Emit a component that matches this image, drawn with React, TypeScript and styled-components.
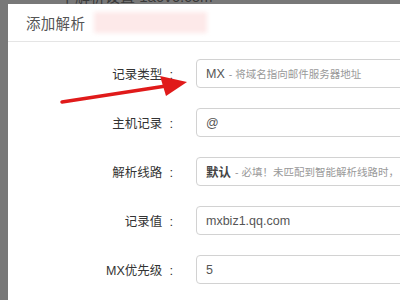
import React from "react";
import styled, { createGlobalStyle } from "styled-components";

const GlobalStyle = createGlobalStyle`
  html, body {
    margin: 0;
    padding: 0;
    width: 400px;
    height: 300px;
    overflow: hidden;
    background: #787878;
    font-family: "Liberation Sans", "Noto Sans CJK SC", sans-serif;
  }
`;

const Page = styled.div`
  position: relative;
  width: 400px;
  height: 300px;
  overflow: hidden;
  background: #787878;
`;

const BackdropStrip = styled.div`
  height: 4px;
  overflow: hidden;
  padding-left: 60px;
  color: #3a3a3a;
  font-size: 15px;
  line-height: 1;
  white-space: nowrap;

  span {
    display: block;
    margin-top: -11px;
  }
`;

const Modal = styled.div`
  margin-left: 8px;
  width: 420px;
  height: 296px;
  background: #fff;
`;

const Header = styled.div`
  display: flex;
  align-items: center;
  height: 37px;
  padding-left: 18px;
  border-bottom: 1px solid #e5e5e5;
`;

const Title = styled.h4`
  margin: 0;
  font-size: 14.5px;
  font-weight: normal;
  color: #555;
  letter-spacing: 0.3px;
`;

const Blur = styled.span`
  margin-left: 9px;
  width: 113px;
  height: 21px;
  background: #fde9e9;
  filter: blur(2px);
`;

const Body = styled.div`
  display: flex;
  flex-direction: column;
  gap: 20px;
  padding-top: 17px;
`;

const Row = styled.div`
  display: grid;
  grid-template-columns: 167px 1fr;
  column-gap: 21px;
  align-items: center;
`;

const Label = styled.label`
  text-align: right;
  font-size: 12.5px;
  color: #333;
  white-space: nowrap;
`;

const Colon = styled.span`
  margin-left: 7px;
  margin-right: 2px;
  font-size: 13px;
`;

const Field = styled.div`
  box-sizing: border-box;
  height: 29px;
  display: flex;
  align-items: center;
  padding-left: 9px;
  border: 1px solid #d2d2d2;
  border-radius: 4px;
  font-size: 12.5px;
  color: #555;
  white-space: nowrap;
  overflow: hidden;
`;

const Main = styled.span<{ $bold?: boolean }>`
  color: ${(p) => (p.$bold ? "#444" : "#555")};
  font-weight: ${(p) => (p.$bold ? "bold" : "normal")};
`;

const Hint = styled.span`
  margin-left: 4px;
  font-size: 10.5px;
  color: #999;
`;

const Arrow = styled.svg`
  position: absolute;
  left: 0;
  top: 0;
  pointer-events: none;
`;

const rows = [
  { label: "记录类型", main: "MX", hint: "- 将域名指向邮件服务器地址" },
  { label: "主机记录", main: "@" },
  { label: "解析线路", main: "默认", hint: "- 必填！未匹配到智能解析线路时，", bold: true },
  { label: "记录值", main: "mxbiz1.qq.com" },
  { label: "MX优先级", main: "5" },
];

export default function App() {
  return (
    <Page>
      <GlobalStyle />
      <BackdropStrip>
        <span>下解析设置 1a6v6.com</span>
      </BackdropStrip>
      <Modal>
        <Header>
          <Title>添加解析</Title>
          <Blur />
        </Header>
        <Body>
          {rows.map((r) => (
            <Row key={r.label}>
              <Label>
                {r.label}
                <Colon>:</Colon>
              </Label>
              <Field>
                <Main $bold={r.bold}>{r.main}</Main>
                {r.hint && <Hint>{r.hint}</Hint>}
              </Field>
            </Row>
          ))}
        </Body>
      </Modal>
      <Arrow width="400" height="300" viewBox="0 0 400 300">
        <path d="M62 102 L166 86" stroke="#e01a1a" strokeWidth="3.5" strokeLinecap="round" />
        <path d="M187 82 L160 76 L166 96 Z" fill="#e01a1a" />
      </Arrow>
    </Page>
  );
}
